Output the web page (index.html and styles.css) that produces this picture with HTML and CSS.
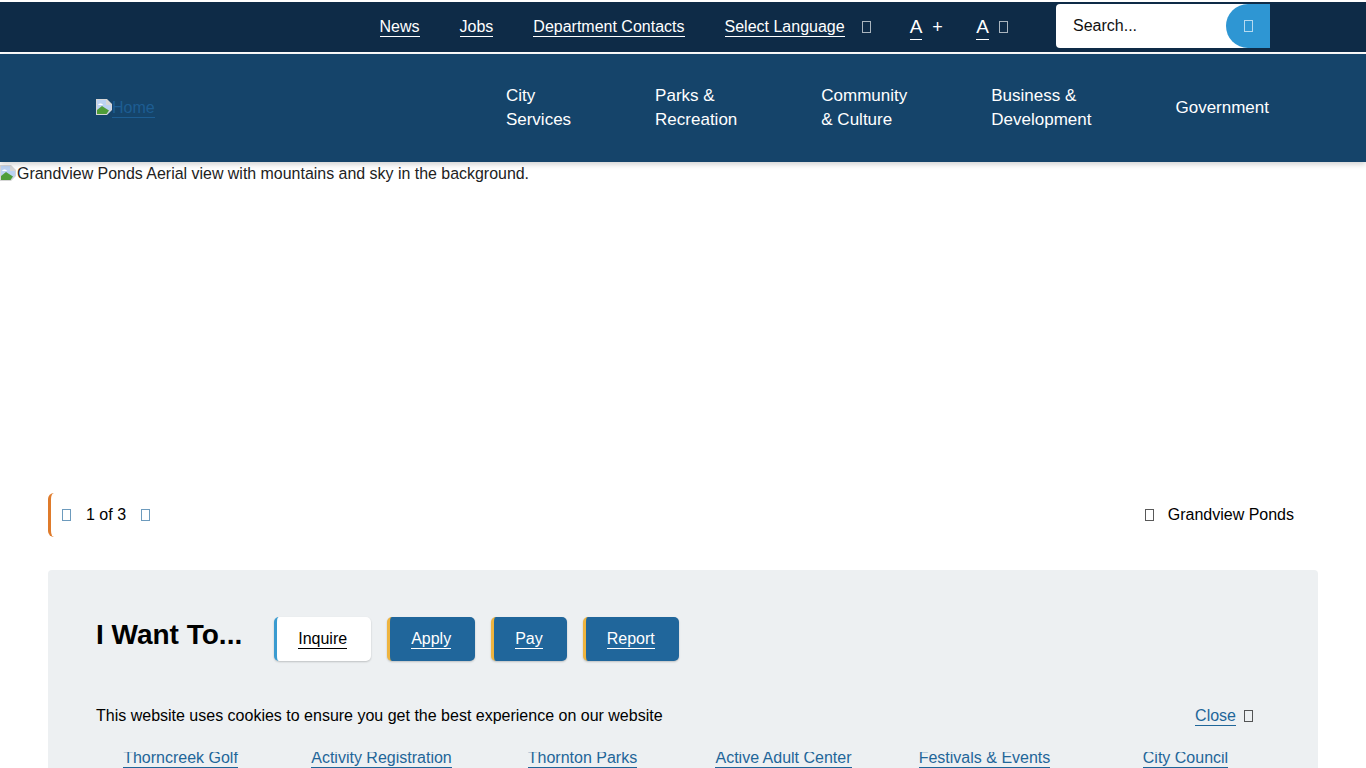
FILE: index.html
```html
<!DOCTYPE html>
<html lang="en">
<head>
    <meta charset="UTF-8">
    <title>City of Thornton</title>
    <link rel="stylesheet" href="styles.css">
</head>
<body>
    <!-- Top utility bar -->
    <div class="topbar">
        <a class="top-link" href="#">News</a>
        <a class="top-link" href="#">Jobs</a>
        <a class="top-link" href="#">Department Contacts</a>
        <div class="lang">
            <a class="top-link" href="#">Select Language</a>
            <span class="tofu"></span>
        </div>
        <div class="sizers">
            <div class="sizer">
                <a class="size-a" href="#">A</a>
                <span class="plus">+</span>
            </div>
            <div class="sizer">
                <a class="size-a" href="#">A</a>
                <span class="tofu"></span>
            </div>
        </div>
        <div class="search">
            <span class="search-text">Search...</span>
            <button class="search-btn"><span class="tofu"></span></button>
        </div>
    </div>

    <!-- Main nav -->
    <div class="mainnav">
        <a class="logo" href="#">
            <svg class="broken" width="16" height="16" viewBox="0 0 16 16">
                <path d="M0 0h11l5 5v6l-5 5H0z" fill="#d6d6d6"/>
                <path d="M1 1h9v5h5v4.5L10.5 15H1z" fill="#bcd2f2"/>
                <path d="M2 6c1-2 4-2 5 0z" fill="#fff"/>
                <path d="M1 15v-4l5-4 3 2 4 2.500L10.500 15z" fill="#4f9d38"/>
            </svg><span class="logo-text">Home</span>
        </a>
        <div class="menu">
            <a href="#">City<br>Services</a>
            <a href="#">Parks &amp;<br>Recreation</a>
            <a href="#">Community<br>&amp; Culture</a>
            <a href="#">Business &amp;<br>Development</a>
            <a href="#">Government</a>
        </div>
    </div>

    <!-- Hero, image did not load -->
    <div class="hero">
        <svg class="broken" width="16" height="16" viewBox="0 0 16 16">
            <path d="M0 0h11l5 5v6l-5 5H0z" fill="#d6d6d6"/>
            <path d="M1 1h9v5h5v4.5L10.5 15H1z" fill="#bcd2f2"/>
            <path d="M2 6c1-2 4-2 5 0z" fill="#fff"/>
            <path d="M1 15v-4l5-4 3 2 4 2.500L10.500 15z" fill="#4f9d38"/>
        </svg><span>Grandview Ponds Aerial view with mountains and sky in the background.</span>
    </div>

    <div class="slider-bar">
        <div class="pager">
            <span class="tofu tofu-blue"></span>
            <span>1 of 3</span>
            <span class="tofu tofu-blue"></span>
        </div>
        <div class="caption">
            <span class="tofu"></span>
            <span>Grandview Ponds</span>
        </div>
    </div>

    <!-- I want to panel -->
    <div class="panel">
        <div class="panel-head">
            <h2>I Want To...</h2>
            <div class="tabs">
                <a class="tab active" href="#"><span>Inquire</span></a>
                <a class="tab" href="#"><span>Apply</span></a>
                <a class="tab" href="#"><span>Pay</span></a>
                <a class="tab" href="#"><span>Report</span></a>
            </div>
        </div>
        <div class="quick-links">
            <a href="#">Thorncreek Golf</a>
            <a href="#">Activity Registration</a>
            <a href="#">Thornton Parks</a>
            <a href="#">Active Adult Center</a>
            <a href="#">Festivals &amp; Events</a>
            <a href="#">City Council</a>
        </div>
    </div>

    <!-- Cookie notice sits over the panel -->
    <div class="cookie">
        <span>This website uses cookies to ensure you get the best experience on our website</span>
        <div class="cookie-close">
            <a href="#">Close</a>
            <span class="tofu"></span>
        </div>
    </div>
</body>
</html>
```

FILE: styles.css
```css
html, body {
    height: 100%;
    overflow: hidden;
}
body {
    margin: 0;
    font-family: "Liberation Sans", Arial, sans-serif;
    font-size: 16px;
    color: #000;
    background: #fff;
}
a {
    text-decoration: none;
}
.tofu {
    display: inline-block;
    box-sizing: border-box;
    width: 9px;
    height: 12px;
    border: 1px solid currentColor;
    opacity: 0.65;
}
.tofu-blue {
    color: #1f6699;
}

.topbar {
    display: flex;
    align-items: center;
    justify-content: flex-end;
    gap: 40px;
    height: 50px;
    margin-top: 2px;
    padding-right: 96px;
    background: #0e2b47;
    color: #fff;
}
.top-link {
    color: #fff;
    line-height: 19px;
    border-bottom: 1px solid #fff;
}
.lang {
    display: flex;
    align-items: center;
    gap: 17px;
}
.sizers {
    display: flex;
    gap: 34px;
    margin-left: -1px;
}
.sizer {
    display: flex;
    align-items: center;
    gap: 10px;
}
.size-a {
    color: #fff;
    font-size: 19px;
    line-height: 24px;
    border-bottom: 1px solid #fff;
}
.plus {
    font-size: 18px;
    width: 10px;
}
.search {
    display: flex;
    align-items: center;
    justify-content: space-between;
    box-sizing: border-box;
    width: 214px;
    height: 44px;
    margin: 0 0 2px 8px;
    padding-left: 17px;
    background: #fff;
    border-radius: 4px 0 0 4px;
    color: #111;
}
.search-btn {
    display: flex;
    align-items: center;
    justify-content: center;
    width: 44px;
    height: 44px;
    padding: 0;
    border: none;
    border-radius: 22px 0 0 22px;
    background: #2e96d3;
    color: #fff;
}

.mainnav {
    display: flex;
    align-items: center;
    justify-content: space-between;
    position: relative;
    height: 108px;
    margin-top: 2px;
    padding: 0 97px 0 96px;
    background: #15446a;
    box-shadow: 0 2px 6px rgba(0, 0, 0, 0.2);
}
.logo {
    display: flex;
    align-items: flex-start;
    color: #1d5d92;
}
.logo-text {
    line-height: 18px;
    border-bottom: 1px solid #1d5d92;
}
.menu {
    display: flex;
    align-items: center;
    gap: 84px;
}
.menu a {
    color: #fff;
    font-size: 17px;
    line-height: 24px;
}

.hero {
    height: 328px;
    padding-top: 3px;
    line-height: 18px;
    color: #222;
}
.broken {
    vertical-align: -2px;
}
.hero span {
    margin-left: 1px;
    font-size: 15.95px;
}

.slider-bar {
    display: flex;
    align-items: center;
    justify-content: space-between;
    height: 44px;
    margin: 0 72px 0 48px;
}
.pager {
    display: flex;
    align-items: center;
    gap: 15px;
    height: 100%;
    padding-left: 11px;
    border-left: 3px solid #df7b2b;
    border-radius: 6px;
}
.caption {
    display: flex;
    align-items: center;
    gap: 14px;
}

.panel {
    margin: 33px 48px 0;
    padding: 47px 48px 48px;
    background: #edf0f2;
    border-radius: 4px;
}
.panel-head {
    display: flex;
    align-items: center;
    gap: 32px;
}
.panel-head h2 {
    margin: 0 0 8px;
    font-size: 28px;
    line-height: 34px;
}
.tabs {
    display: flex;
    gap: 16px;
}
.tab {
    display: block;
    padding: 12px 24px 12px 21px;
    line-height: 19px;
    background: #20669b;
    color: #fff;
    border-left: 3px solid #eeb440;
    border-radius: 5px;
    box-shadow: 0 1px 2px rgba(0, 0, 0, 0.2);
}
.tab span {
    display: block;
    border-bottom: 1px solid currentColor;
}
.tab.active {
    background: #fff;
    color: #000;
    border-left-color: #3a9bd0;
}

.quick-links {
    display: grid;
    grid-template-columns: repeat(6, 1fr);
    margin: 88px -16px 0;
    text-align: center;
}
.quick-links a {
    justify-self: center;
    color: #1f6699;
    line-height: 18px;
    border-bottom: 1px solid #1f6699;
}

.cookie {
    position: fixed;
    left: 48px;
    right: 48px;
    bottom: 16px;
    display: flex;
    align-items: center;
    justify-content: space-between;
    box-sizing: border-box;
    height: 72px;
    padding: 0 65px 0 48px;
    background: #edf0f2;
}
.cookie-close {
    display: flex;
    align-items: center;
    gap: 8px;
}
.cookie-close a {
    color: #1f6699;
    line-height: 18px;
    border-bottom: 1px solid #1f6699;
}
```
